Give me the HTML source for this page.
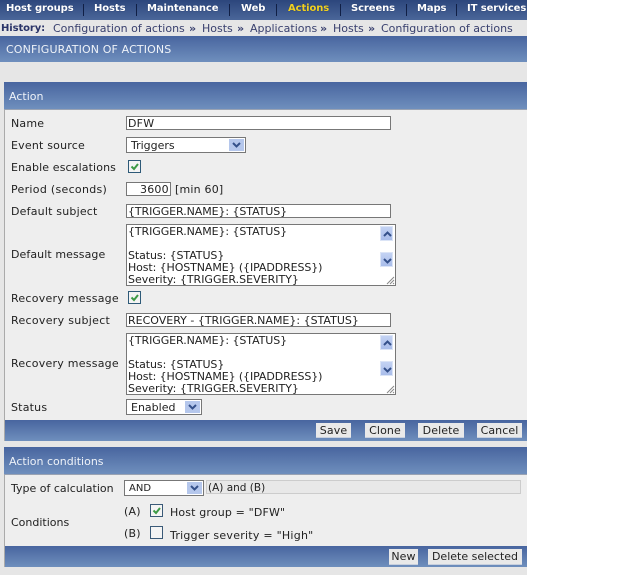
<!DOCTYPE html>
<html><head><meta charset="utf-8"><style>
html,body{margin:0;padding:0;background:#fff;}
#p{position:relative;width:640px;height:575px;overflow:hidden;background:#fff;font:11px "DejaVu Sans","Liberation Sans",sans-serif;color:#222;}
#p div,#p span.t{position:absolute;box-sizing:border-box;white-space:pre;}
.t{line-height:14px;height:14px;margin-top:1px;letter-spacing:.2px;}
.bar{background:linear-gradient(#48659f,#6f8fbd);}
.inp{background:#fff;border:1px solid #777;}
.b{background:#e9e9e9;border-bottom:1px solid #c8d0de;text-align:center;line-height:15px;color:#222;letter-spacing:.1px;}
.n{color:#fff;font-weight:bold;top:2px;font-size:10px;letter-spacing:-.1px;margin-top:0;text-shadow:0 0 1px #1d3060;}
.sep{width:1px;height:12px;top:4px;background:#101f45;}
.h{color:#39406e;top:22px;margin-top:0;letter-spacing:0;}
.w{color:#eef2f8;margin-top:0;letter-spacing:0;}
.u{letter-spacing:-.08px;}
.sb{background:linear-gradient(#c3d2f3,#a9bdea);border:1px solid #dbe4f6;width:13px;height:15px;}
.cb{width:13px;height:13px;background:#f4f4f4;border:1px solid #2e5a78;}
.cb svg,.sb svg,.s svg{position:absolute;left:0;top:0;}
.sa{width:15px;height:12px;background:#b5c7ec;}
</style></head><body><div id="p">
<div style="left:0;top:0;width:527px;height:575px;background:#e6e6e6"></div>

<div style="left:0;top:0;width:527px;height:20px;background:linear-gradient(#2c467c,#4a6699)"></div>
<span class="t n" style="left:6px">Host groups</span><div class="sep" style="left:83px"></div>
<span class="t n" style="left:94px">Hosts</span><div class="sep" style="left:136px"></div>
<span class="t n" style="left:147px">Maintenance</span><div class="sep" style="left:229px"></div>
<span class="t n" style="left:241px">Web</span><div class="sep" style="left:276px"></div>
<span class="t n" style="left:288px;color:#f0d020">Actions</span><div class="sep" style="left:340px"></div>
<span class="t n" style="left:351px">Screens</span><div class="sep" style="left:406px"></div>
<span class="t n" style="left:417px">Maps</span><div class="sep" style="left:456px"></div>
<div style="left:467px;top:0;width:60px;height:20px;overflow:hidden"><span class="t n" style="left:0">IT services</span></div>

<span class="t h" style="left:1px;font-weight:bold;font-size:10px;letter-spacing:-.1px;color:#2a3468">History:</span>
<span class="t h" style="left:53px">Configuration of actions</span>
<span class="t h" style="left:189px;font-weight:bold">»</span>
<span class="t h" style="left:202px">Hosts</span>
<span class="t h" style="left:237px;font-weight:bold">»</span>
<span class="t h" style="left:250px">Applications</span>
<span class="t h" style="left:320px;font-weight:bold">»</span>
<span class="t h" style="left:333px">Hosts</span>
<span class="t h" style="left:368px;font-weight:bold">»</span>
<span class="t h" style="left:381px">Configuration of actions</span>

<div class="bar" style="left:0;top:36px;width:527px;height:26px"></div>
<span class="t w" style="left:6px;top:43px;letter-spacing:.13px">CONFIGURATION OF ACTIONS</span>

<div style="left:4px;top:82px;width:523px;height:359px;background:#eee;border-left:1px solid #aaa"></div>
<div class="bar" style="left:4px;top:82px;width:523px;height:28px;border-bottom:1px solid #9aa3b3"></div>
<span class="t w" style="left:9px;top:90px">Action</span>

<span class="t" style="left:11px;top:116px">Name</span>
<div class="inp" style="left:126px;top:116px;width:265px;height:14px"></div>
<span class="t" style="left:128px;top:116px">DFW</span>

<span class="t" style="left:11px;top:138px">Event source</span>
<div class="inp s" style="left:126px;top:137px;width:120px;height:16px"><div class="sa" style="left:102px;top:1px"><svg width="15" height="12"><path d="M4 4l3.5 3.5L11 4" fill="none" stroke="#34508a" stroke-width="2"/></svg></div></div>
<span class="t" style="left:131px;top:138px;letter-spacing:0">Triggers</span>

<span class="t" style="left:11px;top:160px;letter-spacing:.12px">Enable escalations</span>
<div class="cb" style="left:128px;top:160px"><svg width="11" height="11"><path d="M2.5 5.5l2.5 2.5 4-5" fill="none" stroke="#3d9a46" stroke-width="2"/></svg></div>

<span class="t" style="left:11px;top:182px;letter-spacing:.3px">Period (seconds)</span>
<div class="inp" style="left:126px;top:182px;width:45px;height:14px"></div>
<span class="t" style="left:140px;top:182px">3600</span>
<span class="t" style="left:175px;top:182px">[min 60]</span>

<span class="t" style="left:11px;top:204px">Default subject</span>
<div class="inp" style="left:126px;top:204px;width:265px;height:14px"></div>
<span class="t u" style="left:128px;top:204px">{TRIGGER.NAME}: {STATUS}</span>

<span class="t" style="left:11px;top:247px;letter-spacing:.08px">Default message</span>
<div class="inp" style="left:126px;top:224px;width:270px;height:62px"></div>
<span class="t u" style="left:128px;top:224px">{TRIGGER.NAME}: {STATUS}</span>
<span class="t u" style="left:128px;top:248px">Status: {STATUS}</span>
<span class="t" style="left:128px;top:260px;letter-spacing:-.1px">Host: {HOSTNAME} ({IPADDRESS})</span>
<span class="t" style="left:128px;top:272px;letter-spacing:0">Severity: {TRIGGER.SEVERITY}</span>
<div class="sb" style="left:380px;top:226px"><svg width="13" height="15"><path d="M3 9l3.5-3.5L10 9" fill="none" stroke="#34508a" stroke-width="2"/></svg></div>
<div class="sb" style="left:380px;top:252px"><svg width="13" height="15"><path d="M3 6l3.5 3.5L10 6" fill="none" stroke="#34508a" stroke-width="2"/></svg></div>
<svg style="position:absolute;left:386px;top:276px" width="9" height="9"><path d="M1 8L8 1M4 8l4-4M7 8l1-1" stroke="#888" fill="none"/></svg>

<span class="t" style="left:11px;top:291px;letter-spacing:.25px">Recovery message</span>
<div class="cb" style="left:128px;top:291px"><svg width="11" height="11"><path d="M2.5 5.5l2.5 2.5 4-5" fill="none" stroke="#3d9a46" stroke-width="2"/></svg></div>

<span class="t" style="left:11px;top:313px;letter-spacing:.3px">Recovery subject</span>
<div class="inp" style="left:126px;top:313px;width:265px;height:14px"></div>
<span class="t" style="left:128px;top:313px;letter-spacing:0">RECOVERY - {TRIGGER.NAME}: {STATUS}</span>

<span class="t" style="left:11px;top:356px;letter-spacing:.25px">Recovery message</span>
<div class="inp" style="left:126px;top:333px;width:270px;height:62px"></div>
<span class="t u" style="left:128px;top:333px">{TRIGGER.NAME}: {STATUS}</span>
<span class="t u" style="left:128px;top:357px">Status: {STATUS}</span>
<span class="t" style="left:128px;top:369px;letter-spacing:-.1px">Host: {HOSTNAME} ({IPADDRESS})</span>
<span class="t" style="left:128px;top:381px;letter-spacing:0">Severity: {TRIGGER.SEVERITY}</span>
<div class="sb" style="left:380px;top:335px"><svg width="13" height="15"><path d="M3 9l3.5-3.5L10 9" fill="none" stroke="#34508a" stroke-width="2"/></svg></div>
<div class="sb" style="left:380px;top:361px"><svg width="13" height="15"><path d="M3 6l3.5 3.5L10 6" fill="none" stroke="#34508a" stroke-width="2"/></svg></div>
<svg style="position:absolute;left:386px;top:385px" width="9" height="9"><path d="M1 8L8 1M4 8l4-4M7 8l1-1" stroke="#888" fill="none"/></svg>

<span class="t" style="left:11px;top:400px">Status</span>
<div class="inp s" style="left:126px;top:399px;width:76px;height:16px"><div class="sa" style="left:58px;top:1px"><svg width="15" height="12"><path d="M4 4l3.5 3.5L11 4" fill="none" stroke="#34508a" stroke-width="2"/></svg></div></div>
<span class="t" style="left:131px;top:400px;letter-spacing:0">Enabled</span>

<div class="bar" style="left:4px;top:420px;width:523px;height:21px;border-left:1px solid #aaa"></div>
<div class="b" style="left:316px;top:423px;width:35px;height:15px">Save</div>
<div class="b" style="left:365px;top:423px;width:40px;height:15px">Clone</div>
<div class="b" style="left:418px;top:423px;width:46px;height:15px">Delete</div>
<div class="b" style="left:477px;top:423px;width:45px;height:15px">Cancel</div>

<div style="left:4px;top:447px;width:523px;height:120px;background:#eee;border-left:1px solid #aaa"></div>
<div class="bar" style="left:4px;top:447px;width:523px;height:28px;border-bottom:1px solid #9aa3b3"></div>
<span class="t w" style="left:9px;top:455px">Action conditions</span>

<span class="t" style="left:11px;top:481px;letter-spacing:0">Type of calculation</span>
<div class="inp s" style="left:124px;top:480px;width:80px;height:16px"><div class="sa" style="left:62px;top:1px"><svg width="15" height="12"><path d="M4 4l3.5 3.5L11 4" fill="none" stroke="#34508a" stroke-width="2"/></svg></div></div>
<span class="t" style="left:129px;top:481px;font-size:10px;letter-spacing:0">AND</span>
<div style="left:206px;top:480px;width:315px;height:14px;background:#e8e8e8;border:1px solid #ccc"></div>
<span class="t" style="left:208px;top:480px;font-size:10.5px;letter-spacing:0">(A) and (B)</span>

<span class="t" style="left:11px;top:515px;letter-spacing:0">Conditions</span>
<span class="t" style="left:124px;top:504px">(A)</span>
<div class="cb" style="left:150px;top:504px;border-color:#3a5a78"><svg width="11" height="11"><path d="M2.5 5.5l2.5 2.5 4-5" fill="none" stroke="#3d9a46" stroke-width="2"/></svg></div>
<span class="t" style="left:170px;top:505px;letter-spacing:.15px">Host group = "DFW"</span>
<span class="t" style="left:124px;top:526px">(B)</span>
<div class="cb" style="left:150px;top:526px;border-color:#3a5a78"></div>
<span class="t" style="left:170px;top:528px;letter-spacing:.25px">Trigger severity = "High"</span>

<div class="bar" style="left:4px;top:546px;width:523px;height:21px;border-left:1px solid #aaa"></div>
<div class="b" style="left:389px;top:549px;width:29px;height:16px">New</div>
<div class="b" style="left:428px;top:549px;width:94px;height:16px;letter-spacing:0">Delete selected</div>
</div></body></html>
